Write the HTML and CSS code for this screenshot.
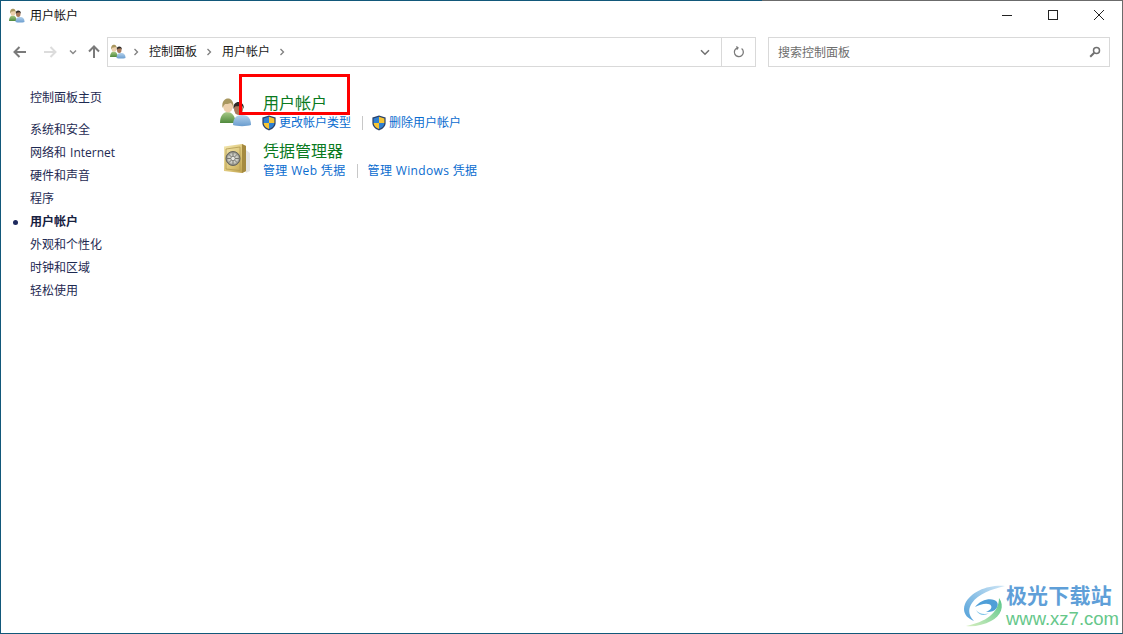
FILE: index.html
```html
<!DOCTYPE html>
<html lang="zh-CN">
<head>
<meta charset="utf-8">
<title>用户帐户</title>
<link rel="stylesheet" href="styles.css">
</head>
<body>
<svg class="defs" width="0" height="0" aria-hidden="true">
  <defs>
    <linearGradient id="gGreen" x1="0" y1="0" x2="0" y2="1"><stop offset="0" stop-color="#a8c987"/><stop offset="1" stop-color="#4f8a3c"/></linearGradient>
    <linearGradient id="gBlue" x1="0" y1="0" x2="0" y2="1"><stop offset="0" stop-color="#b5d2ec"/><stop offset="1" stop-color="#6a9dcf"/></linearGradient>
    <linearGradient id="gGold" x1="0" y1="0" x2="1" y2="1"><stop offset="0" stop-color="#f3e7b0"/><stop offset=".6" stop-color="#dac272"/><stop offset="1" stop-color="#b69845"/></linearGradient>
    <radialGradient id="gDial"><stop offset="0" stop-color="#f2f2ee"/><stop offset=".7" stop-color="#c2c2b9"/><stop offset="1" stop-color="#76766f"/></radialGradient>
    <symbol id="users" viewBox="0 0 32 32">
      <ellipse cx="18.500" cy="12" rx="4.500" ry="6" fill="#a8795a"/>
      <path d="M13.500 12C13 7 15.500 5 18.500 5S24 7 24 12c-.8-2-1.800-3.200-3-3.500-2 .8-4 .8-5.500.8-.8.8-1.500 1.700-2 2.700z" fill="#2f2a26"/>
      <path d="M0 26c0-7 3-11 7.500-11S15.500 19 15.500 26z" fill="url(#gGreen)"/>
      <ellipse cx="8" cy="9" rx="5" ry="6.500" fill="#ecd0ad"/>
      <path d="M2.500 11C1.500 4 5 1.500 8 1.500S14 4 13.500 11c-.8-3-1.800-4.500-2.800-5-2 1-4.500 1-5.500 1C4 8 3 9.500 2.500 11z" fill="#a8975f"/>
      <path d="M13 28c0-6 2.500-10 9-10s9 4 9 10c-4 1.500-14 1.500-18 0z" fill="url(#gBlue)"/>
    </symbol>
    <symbol id="shield" viewBox="0 0 16 16">
      <path d="M8 .6 14.600 2.600V8c0 3.600-3 6-6.600 7.400C4.400 14 1.400 11.600 1.400 8V2.600z" fill="#28406a"/>
      <path d="M8 1.800V8H2.600V3.400z" fill="#2f7fd0"/>
      <path d="M8 1.800 13.400 3.400V8H8z" fill="#f6c533"/>
      <path d="M2.600 8H8v6.100C5 12.900 2.800 11 2.600 8z" fill="#f6c533"/>
      <path d="M8 8h5.400C13.200 11 11 12.900 8 14.100z" fill="#2f7fd0"/>
    </symbol>
  </defs>
</svg>

<div class="window">
  <header class="titlebar">
    <div class="title">
      <svg class="icon16"><use href="#users"/></svg>
      <span>用户帐户</span>
    </div>
    <div class="controls">
      <span class="ctl"><svg width="12" height="12" viewBox="0 0 12 12"><path d="M1 6.500h10" stroke="#222" fill="none"/></svg></span>
      <span class="ctl"><svg width="12" height="12" viewBox="0 0 12 12"><rect x="1.500" y="1.500" width="9" height="9" stroke="#222" fill="none"/></svg></span>
      <span class="ctl"><svg width="12" height="12" viewBox="0 0 12 12"><path d="M1 1l10 10M11 1 1 11" stroke="#222" fill="none"/></svg></span>
    </div>
  </header>

  <nav class="navbar">
    <div class="navbtns">
      <svg class="nav-arrow" width="16" height="16" viewBox="0 0 16 16"><path d="M14 8H3M7.500 3 2.500 8l5 5" stroke="#7a7a7a" stroke-width="2" fill="none"/></svg>
      <svg class="nav-arrow" width="16" height="16" viewBox="0 0 16 16"><path d="M2 8h11M8.500 3l5 5-5 5" stroke="#dcdcdc" stroke-width="2" fill="none"/></svg>
      <svg class="nav-drop" width="8" height="6" viewBox="0 0 8 6"><path d="M1 1.500 4 4.500l3-3" stroke="#8a8a8a" stroke-width="1.500" fill="none"/></svg>
      <svg class="nav-up" width="16" height="16" viewBox="0 0 16 16"><path d="M8 14V3M3 7.500 8 2.500l5 5" stroke="#7a7a7a" stroke-width="2" fill="none"/></svg>
    </div>
    <div class="address">
      <svg class="icon16"><use href="#users"/></svg>
      <svg class="crumb-sep first" width="6" height="8" viewBox="0 0 6 8"><path d="M1.500 1l3 3-3 3" stroke="#7f7f7f" stroke-width="1.300" fill="none"/></svg>
      <span class="crumb">控制面板</span>
      <svg class="crumb-sep" width="6" height="8" viewBox="0 0 6 8"><path d="M1.500 1l3 3-3 3" stroke="#7f7f7f" stroke-width="1.300" fill="none"/></svg>
      <span class="crumb">用户帐户</span>
      <svg class="crumb-sep" width="6" height="8" viewBox="0 0 6 8"><path d="M1.500 1l3 3-3 3" stroke="#7f7f7f" stroke-width="1.300" fill="none"/></svg>
      <span class="spacer"></span>
      <span class="addr-btn drop"><svg width="10" height="7" viewBox="0 0 10 7"><path d="M1 1.200 5 5.200l4-4" stroke="#707070" stroke-width="1.500" fill="none"/></svg></span>
      <span class="addr-btn refresh"><svg width="12" height="12" viewBox="0 0 12 12"><path d="M4.400 1.800A4.500 4.500 0 1 0 8.600 2.500M3.400 .6l1.600 1.300-1.300 1.700" stroke="#7a7a7a" stroke-width="1.300" fill="none"/></svg></span>
    </div>
    <div class="search">
      <span>搜索控制面板</span>
      <svg width="12" height="12" viewBox="0 0 12 12"><circle cx="7.500" cy="4.500" r="3" stroke="#707070" stroke-width="1.500" fill="none"/><path d="M5.200 6.800 1.200 10.800" stroke="#707070" stroke-width="2"/></svg>
    </div>
  </nav>

  <main class="content">
    <aside class="sidebar">
      <a class="side-home">控制面板主页</a>
      <ul class="side-list">
        <li>系统和安全</li>
        <li>网络和 Internet</li>
        <li>硬件和声音</li>
        <li>程序</li>
        <li class="current">用户帐户</li>
        <li>外观和个性化</li>
        <li>时钟和区域</li>
        <li>轻松使用</li>
      </ul>
    </aside>
    <section class="panel">
      <article class="group first">
        <svg class="group-icon"><use href="#users"/></svg>
        <div class="group-body">
          <h2>用户帐户</h2>
          <p class="links">
            <svg class="shield"><use href="#shield"/></svg><a>更改帐户类型</a>
            <i class="divider d1"></i>
            <svg class="shield"><use href="#shield"/></svg><a>删除用户帐户</a>
          </p>
        </div>
      </article>
      <article class="group">
        <svg class="group-icon safe" viewBox="0 0 32 32">
          <path d="M26 7 30 10v18l-4 2z" fill="#000" opacity=".1"/>
          <path d="M4 3.500 22 1l4 2v25l-4 2-18-2z" fill="url(#gGold)"/>
          <path d="M22 1l4 2v25l-4 2z" fill="#a58a40"/>
          <path d="M6 6 20 4v23.500L6 26z" fill="none" stroke="#b39a52" stroke-width=".8"/>
          <circle cx="13" cy="15.500" r="7" fill="url(#gDial)" stroke="#66665f"/>
          <path d="M13 9.500v12M7 15.500h12M8.800 11.300l8.400 8.400M17.200 11.300l-8.400 8.400" stroke="#77776f"/>
          <circle cx="13" cy="15.500" r="2.200" fill="#e8e8e2" stroke="#66665f" stroke-width=".7"/>
        </svg>
        <div class="group-body">
          <h2>凭据管理器</h2>
          <p class="links plain">
            <a>管理 Web 凭据</a>
            <i class="divider d2"></i>
            <a>管理 Windows 凭据</a>
          </p>
        </div>
      </article>
    </section>
  </main>

  <div class="redbox"></div>

  <div class="watermark">
    <svg width="44" height="42" viewBox="0 0 44 42">
      <defs>
        <linearGradient id="wmBlue" x1="0" y1="1" x2="1" y2="0"><stop offset="0" stop-color="#4f9fd8"/><stop offset="1" stop-color="#cfe6f6"/></linearGradient>
        <linearGradient id="wmGreen" x1="0" y1="1" x2="1" y2="0"><stop offset="0" stop-color="#d8efc0"/><stop offset="1" stop-color="#58c58a"/></linearGradient>
      </defs>
      <path d="M42 1C26-.5 8 6 2 19c-3 8 1 14 9 17C5 30 5 24 9 18 15 9 29 4 42 1z" fill="url(#wmBlue)"/>
      <path d="M12 22c6-8 18-10 22-5 3 5-3 11-11 10 5-2 7-5 4-7.500-4-2-10 0-15 2.500z" fill="#4f9fd8"/>
      <path d="M13 25c3 4 9 5 13 3-4 3-10 3-13-3z" fill="#7fc4e8"/>
      <path d="M36 13c6 8 2 18-8 23-7 4-17 6-25 5 9-2 18-5 24-10 6-5 9-11 9-18z" fill="url(#wmGreen)"/>
    </svg>
    <div class="wm-text">
      <div class="wm-name">极光下载站</div>
      <div class="wm-url">www.xz7.com</div>
    </div>
  </div>
</div>
</body>
</html>
```

FILE: styles.css
```css
* { box-sizing: border-box; }
html, body { margin: 0; height: 100%; }
body {
  width: 1123px;
  height: 634px;
  overflow: hidden;
  font-family: "Open Sans", "Noto Sans CJK SC", sans-serif;
  font-size: 12px;
  color: #1a1a1a;
  background: #fff;
}
.defs { position: absolute; }
.window {
  position: relative;
  width: 1123px;
  height: 634px;
  display: flex;
  flex-direction: column;
  background: #fff;
  border: 1px solid #6b6b6b;
  border-left-color: #12587a;
  border-bottom-color: #12587a;
}
.window::before {
  content: "";
  position: absolute;
  left: -1px;
  top: -1px;
  width: 762px;
  height: 1px;
  background: #12587a;
}
.icon16 { width: 16px; height: 16px; flex: none; display: block; }

.titlebar {
  height: 29px;
  flex: none;
  display: flex;
  justify-content: space-between;
  align-items: center;
  padding-left: 8px;
}
.title { display: flex; align-items: center; gap: 5px; line-height: 16px; color: #111; }
.controls { display: flex; margin-top: -1px; }
.ctl { width: 46px; height: 29px; display: flex; align-items: center; justify-content: center; }

.navbar {
  height: 30px;
  margin-top: 7px;
  flex: none;
  display: flex;
  align-items: stretch;
  padding-right: 12px;
}
.navbtns { width: 106px; display: flex; align-items: center; padding-left: 11px; flex: none; }
.nav-arrow { margin-right: 14px; }
.nav-arrow + .nav-arrow { margin-right: 11px; }
.nav-drop { margin-right: 9px; }
.address {
  flex: none;
  width: 649px;
  display: flex;
  align-items: center;
  border: 1px solid #d9d9d9;
  padding-left: 2px;
}
.crumb { color: #1a1a1a; margin: 0 9px 0 10px; line-height: 16px; }
.crumb-sep { flex: none; }
.crumb-sep.first { margin-left: 7px; }
.spacer { flex: 1; }
.addr-btn { height: 100%; display: flex; align-items: center; justify-content: center; }
.addr-btn.drop { width: 33px; }
.addr-btn.refresh { width: 34px; border-left: 1px solid #d9d9d9; }
.search {
  margin-left: 12px;
  flex: 1;
  display: flex;
  align-items: center;
  justify-content: space-between;
  border: 1px solid #d9d9d9;
  padding: 0 8px 0 9px;
  color: #6d6d6d;
}

.content { flex: 1; display: flex; }
.sidebar { width: 219px; flex: none; padding: 22px 0 0 29px; }
.side-home { display: block; line-height: 18px; color: #1e2a52; }
.side-list { list-style: none; margin: 14px 0 0; padding: 0; color: #1e2a52; word-spacing: 1px; }
.side-list li { height: 23px; line-height: 18px; position: relative; }
.side-list .current { font-weight: 700; color: #17203f; }
.side-list .current::before {
  content: "";
  position: absolute;
  left: -17px;
  top: 7px;
  width: 5px;
  height: 5px;
  border-radius: 50%;
  background: #1e2a5e;
}

.panel { flex: 1; padding-top: 26px; }
.group { display: flex; }
.group.first { height: 48px; }
.group-icon { width: 32px; height: 32px; flex: none; margin-top: 4px; }
.group-icon.safe { margin-top: 2px; }
.group-body { margin-left: 11px; }
.group h2 {
  margin: 0;
  font-size: 16px;
  font-weight: 400;
  line-height: 21px;
  color: #0a7a1e;
}
.links { margin: 0; display: flex; align-items: center; height: 17px; }
.links a { color: #0a6ccf; line-height: 17px; }
.links.plain a { letter-spacing: .35px; }
.shield { width: 16px; height: 16px; flex: none; margin: 0 2px 0 -2px; }
.divider { width: 1px; height: 14px; background: #c8c8c8; flex: none; }
.divider.d1 { margin: 0 10px 0 11px; }
.divider.d2 { margin: 0 10px 0 11px; }

.redbox {
  position: absolute;
  left: 238px;
  top: 73px;
  width: 111px;
  height: 41px;
  border: 3px solid #f00;
}
.watermark {
  position: absolute;
  right: 3px;
  bottom: 5px;
  display: flex;
  align-items: center;
}
.wm-text { margin-left: -1px; }
.wm-name { font-size: 21px; font-weight: 700; line-height: 25px; color: #5f9fd8; letter-spacing: .2px; font-family: "Liberation Sans", "Noto Sans CJK SC", sans-serif; }
.wm-url { font-size: 18.500px; line-height: 19px; margin-top: 1px; color: #66c78a; font-family: "Liberation Sans", sans-serif; }
```
